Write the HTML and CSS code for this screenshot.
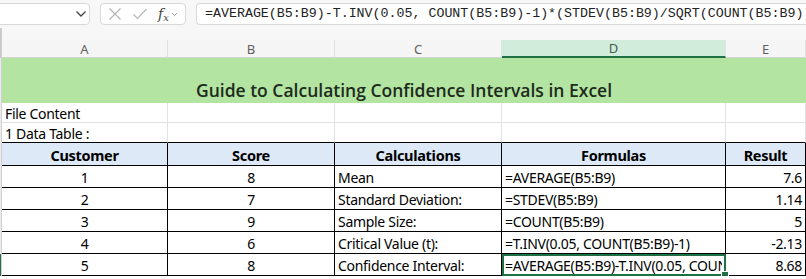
FILE: index.html
```html
<!DOCTYPE html>
<html lang="en">
<head>
    <meta charset="UTF-8">
    <meta name="viewport" content="width=device-width, initial-scale=1.0">
    <title>Confidence Intervals in Excel</title>
    <link rel="stylesheet" href="styles.css">
</head>
<body>
    <div class="toolbar">
        <div class="name-box">
            <svg class="chevron" width="12" height="8" viewBox="0 0 12 8"><path d="M1.5 1.5 L6 6 L10.5 1.5" fill="none" stroke="#444" stroke-width="1.3"/></svg>
        </div>
        <div class="fx-buttons">
            <svg width="14" height="14" viewBox="0 0 14 14"><path d="M1.5 1.5 L12.5 12.5 M12.5 1.5 L1.5 12.5" stroke="#b5b5b5" stroke-width="1.2"/></svg>
            <svg width="16" height="14" viewBox="0 0 16 14"><path d="M1.5 7.5 L5.5 11.5 L14.5 2" fill="none" stroke="#b5b5b5" stroke-width="1.2"/></svg>
            <span class="fx">f<sub>x</sub></span>
            <svg width="7" height="5" viewBox="0 0 7 5"><path d="M1 1 L3.5 3.5 L6 1" fill="none" stroke="#aaa" stroke-width="1"/></svg>
        </div>
        <div class="formula">=AVERAGE(B5:B9)-T.INV(0.05, COUNT(B5:B9)-1)*(STDEV(B5:B9)/SQRT(COUNT(B5:B9)))</div>
    </div>

    <div class="sheet">
        <!-- spacer above column headers -->
        <div class="gutter dark"></div>
        <div class="spacer"></div>

        <!-- column headers -->
        <div class="gutter dark"></div>
        <div class="col-head">A</div>
        <div class="col-head">B</div>
        <div class="col-head">C</div>
        <div class="col-head selected">D</div>
        <div class="col-head">E</div>

        <!-- row 2: title -->
        <div class="gutter"></div>
        <div class="title">Guide to Calculating Confidence Intervals in Excel</div>

        <!-- row 3 -->
        <div class="gutter"></div>
        <div class="cell">File Content</div>
        <div class="cell"></div>
        <div class="cell"></div>
        <div class="cell"></div>
        <div class="cell"></div>

        <!-- row 4 -->
        <div class="gutter"></div>
        <div class="cell above-table">1 Data Table :</div>
        <div class="cell above-table"></div>
        <div class="cell above-table"></div>
        <div class="cell above-table"></div>
        <div class="cell above-table"></div>

        <!-- row 5: table header -->
        <div class="gutter"></div>
        <div class="cell th">Customer</div>
        <div class="cell th">Score</div>
        <div class="cell th">Calculations</div>
        <div class="cell th">Formulas</div>
        <div class="cell th">Result</div>

        <div class="gutter"></div>
        <div class="cell td center">1</div>
        <div class="cell td center">8</div>
        <div class="cell td">Mean</div>
        <div class="cell td">=AVERAGE(B5:B9)</div>
        <div class="cell td right">7.6</div>

        <div class="gutter"></div>
        <div class="cell td center">2</div>
        <div class="cell td center">7</div>
        <div class="cell td">Standard Deviation:</div>
        <div class="cell td">=STDEV(B5:B9)</div>
        <div class="cell td right">1.14</div>

        <div class="gutter"></div>
        <div class="cell td center">3</div>
        <div class="cell td center">9</div>
        <div class="cell td">Sample Size:</div>
        <div class="cell td">=COUNT(B5:B9)</div>
        <div class="cell td right">5</div>

        <div class="gutter"></div>
        <div class="cell td center">4</div>
        <div class="cell td center">6</div>
        <div class="cell td">Critical Value (t):</div>
        <div class="cell td">=T.INV(0.05, COUNT(B5:B9)-1)</div>
        <div class="cell td right">-2.13</div>

        <div class="gutter active"></div>
        <div class="cell td center">5</div>
        <div class="cell td center">8</div>
        <div class="cell td">Confidence Interval:</div>
        <div class="cell td active-cell"><span class="clip">=AVERAGE(B5:B9)-T.INV(0.05, COUNT(B5:B9)-1)*(STDEV(B5:B9)/SQRT(COUNT(B5:B9)))</span><span class="handle"></span></div>
        <div class="cell td right">8.68</div>
    </div>
</body>
</html>
```

FILE: styles.css
```css
body {
    margin: 0;
    background-color: #ffffff;
    font-family: "Noto Sans", "Liberation Sans", sans-serif;
    color: #000000;
    overflow: hidden;
}
.toolbar {
    display: flex;
    align-items: center;
    height: 28px;
    padding-top: 2px;
    box-sizing: border-box;
    background-color: #f7f7f7;
}
.name-box {
    width: 94px;
    height: 22px;
    margin-left: -4px;
    margin-top: -2px;
    display: flex;
    align-items: center;
    justify-content: flex-end;
    padding-right: 2px;
    box-sizing: border-box;
    background-color: #fff;
    border: 1px solid #d9d9d9;
    border-radius: 4px;
}
.fx-buttons {
    width: 86px;
    height: 22px;
    margin-left: 10px;
    margin-top: -2px;
    display: flex;
    align-items: center;
    gap: 10px;
    padding-left: 7px;
    box-sizing: border-box;
    background-color: #fff;
    border: 1px solid #d9d9d9;
    border-radius: 4px;
}
.fx {
    font-family: "DejaVu Serif", serif;
    font-style: italic;
    font-size: 14px;
    color: #444;
    margin-left: 0;
    margin-right: -8px;
}
.fx sub {
    font-size: 10px;
    vertical-align: -2px;
}
.formula {
    flex: 1;
    height: 22px;
    margin-left: 10px;
    margin-top: -2px;
    padding-left: 8px;
    box-sizing: border-box;
    background-color: #fff;
    border: 1px solid #d9d9d9;
    border-right: none;
    border-radius: 4px 0 0 4px;
    font-family: "Liberation Mono", monospace;
    font-size: 13.3px;
    line-height: 20px;
    color: #222;
    white-space: nowrap;
    overflow: hidden;
}
.sheet {
    display: grid;
    grid-template-columns: 2px 166px 167px 167px 224px 80px;
    grid-template-rows: 12px 18px 45px 20px 20px 23px 22px 22px 22px 22px 22px;
    background-color: #fff;
}
.spacer {
    grid-column: 2 / 7;
    background-color: #f7f7f7;
}
.gutter {
    background-color: #ebebeb;
    border-right: 1px solid #d0d0d0;
    box-sizing: border-box;
}
.gutter.dark {
    background-color: #c8c8c8;
}
.gutter.active {
    background-color: #217346;
}
.col-head {
    display: flex;
    align-items: center;
    justify-content: center;
    font-size: 13px;
    color: #5f5f5f;
    background-color: #f5f5f5;
    border-right: 1px solid #e2e2e2;
    border-bottom: 1px solid #d4d4d4;
    box-sizing: border-box;
}
.col-head.selected {
    background-color: #d2ecdc;
    color: #3e5c48;
    border-bottom: 2px solid #1e7145;
}
.title {
    grid-column: 2 / 7;
    display: flex;
    align-items: flex-end;
    justify-content: center;
    padding-bottom: 1px;
    box-sizing: border-box;
    background-color: #b4e4a2;
    font-family: "Open Sans", "Noto Sans", sans-serif;
    font-size: 17.5px;
    font-weight: 600;
    color: #1c2b1c;
}
.cell {
    display: flex;
    align-items: center;
    padding: 1px 3px 0;
    box-sizing: border-box;
    font-size: 14px;
    letter-spacing: -0.3px;
    white-space: nowrap;
    overflow: hidden;
    border-right: 1px solid #e2e2e2;
    border-bottom: 1px solid #e2e2e2;
}
.above-table {
    border-bottom: 1px solid #000;
}
.th {
    justify-content: center;
    font-weight: bold;
    font-size: 14.5px;
    background-color: #dde9f6;
    border-right: 1px solid #000;
    border-bottom: 1px solid #000;
}
.td {
    border-right: 1px solid #000;
    border-bottom: 1px solid #000;
}
.center {
    justify-content: center;
}
.right {
    justify-content: flex-end;
}
.active-cell {
    position: relative;
    overflow: visible;
    outline: 2px solid #1e7145;
    outline-offset: -2px;
}
.clip {
    display: block;
    overflow: hidden;
    width: 100%;
}
.handle {
    position: absolute;
    right: -4px;
    bottom: -4px;
    width: 6px;
    height: 6px;
    background-color: #1e7145;
    border: 1px solid #fff;
}
```
